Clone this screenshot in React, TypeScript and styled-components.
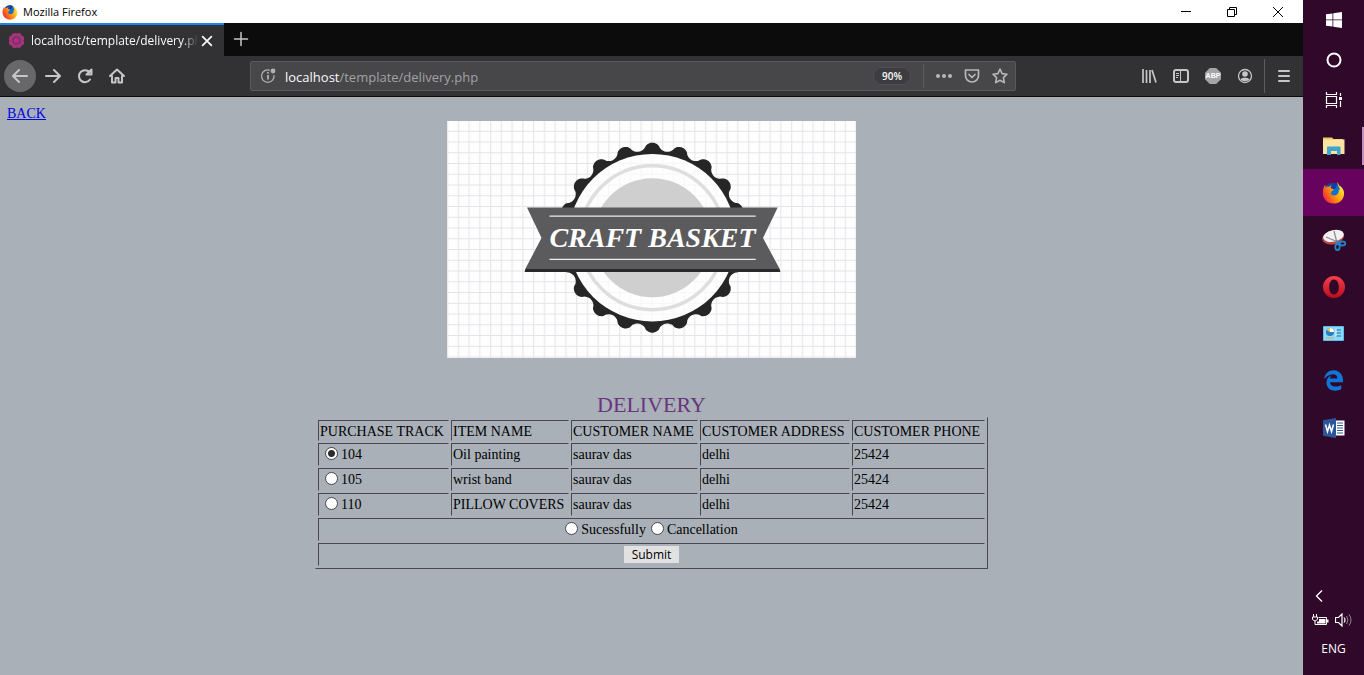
import React from "react";
import styled, { createGlobalStyle } from "styled-components";

const ui = `"Open Sans", "Noto Sans", sans-serif`;
const serif = `"Liberation Serif", "Times New Roman", serif`;

const GlobalStyle = createGlobalStyle`
  * { box-sizing: border-box; }
  body { margin: 0; background: #a9b0b8; }
  svg { display: block; flex: none; }
`;

const Desktop = styled.div`
  display: flex;
  min-height: 100vh;
`;

const Browser = styled.div`
  flex: 1;
  min-width: 0;
  display: flex;
  flex-direction: column;
`;

const TitleBar = styled.header`
  display: flex;
  align-items: center;
  height: 23px;
  background: #fff;
  padding-left: 2px;
  font: 11px/16px ${ui};
  color: #000;
`;

const TitleText = styled.span`
  flex: 1;
  margin-left: 5px;
`;

const WindowButton = styled.button`
  display: flex;
  align-items: center;
  justify-content: center;
  width: 46px;
  height: 22px;
  padding: 0;
  border: 0;
  background: none;
`;

const WindowButtons = styled.div`
  display: flex;
  margin-right: 2px;
`;

const TabStrip = styled.div`
  display: flex;
  gap: 1px;
  height: 33px;
  background: #0c0c0d;
`;

const Tab = styled.div`
  display: flex;
  align-items: center;
  width: 224px;
  padding: 0 8px;
  background: #323234;
  border-top: 2px solid #1b84f0;
  color: #f9f9fa;
  font: 12px/18px ${ui};
`;

const TabTitle = styled.span`
  flex: 1;
  min-width: 0;
  margin-left: 6px;
  overflow: hidden;
  white-space: nowrap;
  mask-image: linear-gradient(to left, transparent, #000 16px);
`;

const IconButton = styled.button<{ $round?: boolean }>`
  display: flex;
  align-items: center;
  justify-content: center;
  flex: none;
  width: 32px;
  height: 32px;
  padding: 0;
  border: 0;
  border-radius: 50%;
  margin-right: ${(p) => (p.$round ? 1 : 0)}px;
  background: ${(p) => (p.$round ? "#68686a" : "none")};
  color: #c6c6c8;
`;

const TabClose = styled(IconButton)`
  width: 18px;
  height: 24px;
  color: #f9f9fa;
`;

const ToolBar = styled.nav`
  display: flex;
  align-items: center;
  height: 41px;
  padding: 0 3px 0 4px;
  background: #323234;
  border-bottom: 1px solid #0c0c0d;
`;

const Spring = styled.div`
  flex: 117 1 0;
`;

const UrlBar = styled.div`
  flex: 754 1 0;
  min-width: 0;
  display: flex;
  align-items: center;
  height: 30px;
  padding: 0 1px 0 9px;
  background: #474749;
  border: 1px solid #5a5a5c;
  border-radius: 2px;
  color: #b1b1b3;
  font: 13px/20px ${ui};
`;

const Address = styled.div`
  flex: 1;
  margin-left: 8px;
  padding-top: 1px;
  color: #a2a2a4;
`;

const Host = styled.span`
  color: #f9f9fa;
`;

const Zoom = styled.button`
  width: 38px;
  height: 18px;
  padding: 0;
  border: 1px solid #4b5058;
  border-radius: 9px;
  background: #3d3d40;
  color: #f9f9fa;
  font: 10px/14px ${ui};
  font-weight: 600;
`;

const Divider = styled.div<{ $tall?: boolean }>`
  width: 1px;
  height: ${(p) => (p.$tall ? 34 : 24)}px;
  margin: ${(p) => (p.$tall ? "0 3px" : "0 6px 0 12px")};
  background: #5c5c5e;
`;

const UrlAction = styled(IconButton)`
  width: 28px;
  height: 28px;
  color: #b8b8ba;
`;

const Page = styled.main`
  flex: 1;
  padding: 8px 7px;
  background: #a9b0b8;
  font: 14px/17px ${serif};
  color: #000;
`;

const BackLink = styled.a`
  color: #0000e0;
`;

const BackRow = styled.div`
  height: 16px;
`;

const Banner = styled.svg`
  margin: 0 auto 34px;
`;

const DeliveryTable = styled.table`
  margin: 0 auto;
  border-collapse: separate;
  border-spacing: 2px;
  border: 1px solid transparent;
  border-right-color: #444a50;
  border-bottom-color: #444a50;
`;

const Caption = styled.caption`
  height: 25px;
  color: #68357e;
  font-size: 22px;
  line-height: 25px;
`;

const cell = `
  padding: 1px;
  border: 1px solid transparent;
  border-top-color: #444a50;
  border-left-color: #444a50;
  white-space: nowrap;
`;

const HeadCell = styled.th<{ $width: number }>`
  ${cell}
  padding: 2px 1px 0;
  width: ${(p) => p.$width}px;
  height: 21px;
  font-weight: 400;
  text-align: left;
`;

const Cell = styled.td`
  ${cell}
  height: 23px;
`;

const ChoiceGroup = styled.div`
  display: flex;
  justify-content: center;
  gap: 5px;
`;

const Choice = styled.label<{ $inset?: boolean }>`
  display: flex;
  align-items: center;
  padding-left: ${(p) => (p.$inset ? 5 : 0)}px;
`;

const Radio = styled.input`
  appearance: none;
  width: 13px;
  height: 13px;
  margin: 0 3px 2px 0;
  border: 1px solid #45484c;
  border-radius: 50%;
  background: #fff;

  &:checked {
    background: radial-gradient(circle, #2b2b2b 3px, #fff 4px);
  }
`;

const Submit = styled.button`
  display: block;
  width: 55px;
  height: 17px;
  margin: 0 auto;
  padding: 0;
  border: 0;
  background: #e1e1e1;
  color: #000;
  font: 12px/17px ${ui};
`;

const TaskBar = styled.aside`
  display: flex;
  flex-direction: column;
  flex: none;
  width: 61px;
  background: #30082a;
  color: #fff;
`;

const Task = styled.button<{ $app?: boolean; $active?: boolean; $open?: boolean }>`
  display: flex;
  align-items: center;
  justify-content: center;
  flex: none;
  height: ${(p) => (p.$app ? 47 : 40)}px;
  padding: 0;
  border: 0;
  background: ${(p) =>
    p.$active
      ? "#67035f"
      : p.$open
        ? "linear-gradient(#c58abf, #c58abf) right center / 2px 38px no-repeat"
        : "none"};
  color: #fff;
`;

const AppTasks = styled.div`
  display: flex;
  flex-direction: column;
  padding-top: 2px;
`;

const Tray = styled.div`
  display: flex;
  flex-direction: column;
  align-items: center;
  margin-top: auto;
  padding-bottom: 16px;
  font: 12px/20px ${ui};
`;

const TrayRow = styled.div<{ $start?: boolean }>`
  display: flex;
  align-items: center;
  justify-content: ${(p) => (p.$start ? "flex-start" : "center")};
  gap: 6px;
  width: 100%;
  height: 24px;
  padding-left: ${(p) => (p.$start ? 12 : 0)}px;
  padding-right: ${(p) => (p.$start ? 0 : 3)}px;
`;

const Language = styled.div`
  padding-top: 7px;
`;

function FirefoxIcon({ size, id }: { size: number; id: string }) {
  return (
    <svg width={size} height={size} viewBox="0 0 24 24">
      <defs>
        <linearGradient id={id} x1="0.95" y1="0.2" x2="0.05" y2="0.75">
          <stop offset="0" stopColor="#fff04a" />
          <stop offset="0.35" stopColor="#ffb515" />
          <stop offset="0.65" stopColor="#ff7a12" />
          <stop offset="1" stopColor="#f02a3c" />
        </linearGradient>
      </defs>
      <circle cx="11.5" cy="11" r="9" fill="#0a6fd0" />
      <path d="M6 4.500C8 2 13 .8 16 3l-2 5-5 2z" fill="#123f9c" />
      <path
        d="M16 1c1 1.500 1.500 2.500 1.800 3.800 4 2.200 6 6 5 10.200C21.700 20.300 17.500 23.500 12 23.500 5.500 23.500.8 18.500.8 12.500c0-3.500 1-6 2.400-8.500l.8 2.700C5 6 6 5.700 7.400 6c.6-.8 1.500-1.500 2.700-1.800-.8 1.100-1.200 2-.9 3 .6 1 2 .9 3.200 1.100-.2 1.300-1.500 1.900-2.500 2.600-.3 1 .1 1.700-1 2.200 1.700 2.400 4.700 2.400 6.700 1 1.800-1.200 2.300-3.500 1.700-5.600.7.500 1 .9 1.300 1.500.2-3.500-2.500-4.700-2.600-9z"
        fill={`url(#${id})`}
      />
    </svg>
  );
}

function FlowerIcon() {
  const petals = Array.from({ length: 8 }, (_, i) => ((i + 0.5) * Math.PI) / 4);
  return (
    <svg width="17" height="17" viewBox="0 0 17 17">
      {petals.map((a) => (
        <circle key={a} cx={8.5 + 5 * Math.cos(a)} cy={8.5 + 5 * Math.sin(a)} r="3" fill="#a3357b" />
      ))}
      <circle cx="8.500" cy="8.500" r="5" fill="#a3357b" />
      <circle cx="8.500" cy="8.500" r="3.500" fill="none" stroke="#7a2c68" strokeWidth="1.500" />
      <circle cx="8.500" cy="8.500" r="1.500" fill="#e0187c" />
    </svg>
  );
}

const Line = ({ d, size = 16, w = 2 }: { d: string; size?: number; w?: number }) => (
  <svg
    width={size}
    height={size}
    viewBox="0 0 16 16"
    fill="none"
    stroke="currentColor"
    strokeWidth={w}
    strokeLinecap="round"
    strokeLinejoin="round"
  >
    <path d={d} />
  </svg>
);

function LibraryIcon() {
  return (
    <svg width="16" height="16" viewBox="0 0 16 16" stroke="currentColor" strokeWidth="2">
      <path d="M2 1v14M5.500 2v13M9 2v13M11 2l4 12.500" strokeWidth="1.700" />
    </svg>
  );
}

function SidebarIcon() {
  return (
    <svg width="16" height="16" viewBox="0 0 16 16" fill="none" stroke="currentColor">
      <rect x="1" y="2" width="14" height="12" rx="2" strokeWidth="2" />
      <path d="M7.500 2v12M3 5.500h3M3 7.500h3M3 9.500h2" strokeWidth="1" />
    </svg>
  );
}

const AbpLabel = styled.span`
  display: flex;
  align-items: center;
  justify-content: center;
  width: 16px;
  height: 16px;
  background: #a4a4a6;
  clip-path: polygon(30% 0, 70% 0, 100% 30%, 100% 70%, 70% 100%, 30% 100%, 0 70%, 0 30%);
  color: #fff;
  font: bold 7px/16px "Liberation Sans", sans-serif;
`;

function AccountIcon() {
  return (
    <svg width="16" height="16" viewBox="0 0 16 16">
      <circle cx="8" cy="8" r="6.500" fill="none" stroke="currentColor" strokeWidth="1.300" />
      <circle cx="8" cy="6" r="2.800" fill="currentColor" />
      <path d="M3.500 11.500C5 9.500 6.500 9.700 8 9.700s3 0 4.500 1.800C11 13.500 5 13.500 3.500 11.500z" fill="currentColor" />
    </svg>
  );
}

function InfoIcon() {
  return (
    <svg width="17" height="16" viewBox="0 0 17 16">
      <path d="M10 2.200A6.300 6.300 0 1 0 14 7" fill="none" stroke="currentColor" strokeWidth="1.200" />
      <path d="M8 7v4.500" fill="none" stroke="currentColor" strokeWidth="1.800" />
      <circle cx="8" cy="4.800" r="1" fill="currentColor" />
      <circle cx="13" cy="3" r="2.400" fill="currentColor" />
    </svg>
  );
}

function scallop(cx: number, cy: number) {
  const points = Array.from({ length: 720 }, (_, i) => {
    const a = (i * Math.PI) / 360 - Math.PI / 2;
    const wave = Math.cos((20 * i * Math.PI) / 360);
    const r = 91 + 4 * Math.sign(wave) * Math.pow(Math.abs(wave), 0.65);
    return `${(cx + r * Math.cos(a)).toFixed(2)},${(cy + r * Math.sin(a)).toFixed(2)}`;
  });
  return points.join(" ");
}

function CraftBasket() {
  return (
    <Banner width="409" height="237" viewBox="0 0 409 237" role="img" aria-label="Craft Basket">
      <defs>
        <pattern id="grid" width="10.750" height="10.750" patternUnits="userSpaceOnUse">
          <path d="M.7 0V10.750M0 10.250H10.750" stroke="#e3e4e8" strokeWidth="1" />
        </pattern>
      </defs>
      <rect width="409" height="237" fill="#fefefe" />
      <rect width="409" height="237" fill="url(#grid)" />
      <polygon points={scallop(205.3, 116.7)} fill="#262626" />
      <circle cx="205.300" cy="116.700" r="83.700" fill="#fefefe" />
      <circle cx="205.300" cy="116.700" r="83" fill="url(#grid)" opacity=".3" />
      <circle cx="205.300" cy="116.700" r="72" fill="none" stroke="#dedede" strokeWidth="3.500" />
      <circle cx="205.300" cy="116.700" r="59.500" fill="#cfcfcf" />
      <path d="M80 86.500H330.700L316 117 333 148.500V151H78V148.500L94.500 117z" fill="#5b5b5d" />
      <path d="M79 148H332l1.500 3H77.500z" fill="#282828" />
      <path d="M102.500 95.200H308.700M102.500 138.300H308.700" stroke="#ececec" strokeWidth="1.200" />
      <text
        x="205.500"
        y="126"
        textAnchor="middle"
        fontFamily={`"Liberation Serif", serif`}
        fontStyle="italic"
        fontWeight="700"
        fontSize="28"
        fill="#fff"
      >
        CRAFT BASKET
      </text>
    </Banner>
  );
}

function StartIcon() {
  return (
    <svg width="16" height="16" viewBox="0 0 16 16" fill="#fff">
      <path d="M0 2.300 6.500 1.400V7.500H0zM7.300 1.300 16 0V7.500H7.300zM0 8.300H6.500V14.600L0 13.700zM7.300 8.300H16V16L7.300 14.700z" />
    </svg>
  );
}

function TaskViewIcon() {
  return (
    <svg width="18" height="16" viewBox="0 0 18 16" fill="none" stroke="#fff" strokeWidth="1.200">
      <path d="M1.500 0v2.500h10V0M1.500 16v-2.500h10V16M1.500 4.500h10v7h-10zM15.500 1v3M15.500 9v6" />
      <path d="M14 5h3v3h-3z" fill="#fff" stroke="none" />
    </svg>
  );
}

function FolderIcon() {
  return (
    <svg width="22" height="20" viewBox="0 0 22 20">
      <path d="M0 1.500h9l1.500 1.500H20v3H0z" fill="#efc768" />
      <path d="M0 3.500h21.500V18H0z" fill="#fbe3a0" />
      <path d="M4 19v-7.500q0-1 1-1h11.500q1 0 1 1V19h-3.500v-4H8v4z" fill="#3fa4cf" />
    </svg>
  );
}

function SnipIcon() {
  return (
    <svg width="24" height="22" viewBox="0 0 24 22">
      <ellipse cx="11" cy="8.500" rx="11" ry="6.800" fill="#b84a48" transform="rotate(-12 11 8)" />
      <ellipse cx="11.500" cy="7" rx="10.500" ry="5.800" fill="#f3f0f1" transform="rotate(-12 11 7)" />
      <path d="M4 8l12 5M12 2l3 12" stroke="#8d8d95" strokeWidth="1.300" />
      <g fill="none" stroke="#2483c5" strokeWidth="1.800">
        <ellipse cx="15.500" cy="18" rx="2.200" ry="3" />
        <ellipse cx="20.500" cy="14.500" rx="2.800" ry="2" />
        <path d="M14 12l4 2M15 15l3-2" />
      </g>
    </svg>
  );
}

function OperaIcon() {
  return (
    <svg width="22" height="22" viewBox="0 0 22 22">
      <defs>
        <linearGradient id="opera" x1="0" y1="0" x2="0" y2="1">
          <stop offset="0" stopColor="#f5404b" />
          <stop offset="1" stopColor="#b80d1b" />
        </linearGradient>
      </defs>
      <path
        fillRule="evenodd"
        d="M11 0a11 11 0 1 0 0 22 11 11 0 1 0 0-22zM11 3.500c3 0 4.800 3.400 4.800 7.500s-1.800 7.500-4.800 7.500S6.200 15.100 6.200 11 8 3.500 11 3.500z"
        fill="url(#opera)"
      />
    </svg>
  );
}

function PanelIcon() {
  return (
    <svg width="21" height="15" viewBox="0 0 21 15">
      <rect width="21" height="15" rx="1" fill="#56bdec" />
      <rect x="1" y="1" width="19" height="13" fill="#8bd8f7" />
      <circle cx="7" cy="6" r="4" fill="#217fc4" />
      <path d="M7 6V2a4 4 0 0 1 4 4z" fill="#fff" />
      <path d="M7 6l-3.500-2a4 4 0 0 1 3.500-2z" fill="#f5c34d" />
      <path d="M13 4h5M13 7h5M13 10h5" stroke="#2271b4" strokeWidth="1.200" />
      <path d="M13 2.500v8" stroke="#e9f8ff" />
      <path d="M3 12h8" stroke="#e6a745" />
    </svg>
  );
}

function EdgeIcon() {
  return (
    <svg width="21" height="21" viewBox="0 0 512 512" fill="#0f76d8">
      <path d="M486.286 243.671c0-44.032-7.754-84.465-28.801-122.405C416.498 47.879 343.912 8.001 258.893 8.001 118.962 7.724 40.617 113.214 26.056 227.679c42.429-61.312 117.073-121.376 220.375-124.966 0 0 109.666 0 99.419 104.957H169.997c6.369-37.386 18.554-58.986 34.339-78.926-75.048 34.893-121.850 96.096-120.742 188.315.83 71.448 50.124 144.836 120.743 171.976 83.357 31.847 192.776 7.200 240.132-21.324V363.307c-80.864 56.494-270.871 60.925-272.255-67.572h314.073v-52.064z" />
    </svg>
  );
}

function WordIcon() {
  return (
    <svg width="22" height="20" viewBox="0 0 22 20">
      <path d="M12 2.500h9.500v15H12z" fill="#fff" />
      <path d="M14 5h6M14 7.500h6M14 10h6M14 12.500h6M14 15h6" stroke="#2b579a" />
      <path d="M0 2.200 13 0v20L0 17.800z" fill="#2b579a" />
      <path d="M2.500 6.500 4.500 13.500 6.500 7 8.500 13.500 10.500 6.500" fill="none" stroke="#fff" strokeWidth="1.500" />
    </svg>
  );
}

function BatteryIcon() {
  return (
    <svg width="17" height="13" viewBox="0 0 17 13" fill="none" stroke="#fff">
      <path d="M1.500 0v3M4.500 0v3M.5 3h5v2.500L3 7 .5 5.500zM3 7v3.500h3" />
      <path d="M6.500 3.500h8v7H5" />
      <path d="M7 5h6.500v4.500H5V7.500h2zM15 5.500h1.500v3H15z" fill="#fff" stroke="none" />
    </svg>
  );
}

function SpeakerIcon() {
  return (
    <svg width="17" height="14" viewBox="0 0 17 14" fill="none" stroke="#fff">
      <path d="M.5 4.500h3L7 1v12L3.500 9.500h-3zM9 4.500q2 2.500 0 5" strokeWidth="1.200" />
      <path d="M11.500 3q3 4 0 8M14 1.500q4 5.500 0 11" opacity=".5" />
    </svg>
  );
}

const columns = [
  { title: "PURCHASE TRACK", width: 131 },
  { title: "ITEM NAME", width: 118 },
  { title: "CUSTOMER NAME", width: 127 },
  { title: "CUSTOMER ADDRESS", width: 150 },
  { title: "CUSTOMER PHONE", width: 133 },
];

const orders = [
  { track: "104", item: "Oil painting", name: "saurav das", address: "delhi", phone: "25424" },
  { track: "105", item: "wrist band", name: "saurav das", address: "delhi", phone: "25424" },
  { track: "110", item: "PILLOW COVERS", name: "saurav das", address: "delhi", phone: "25424" },
];

export default function App() {
  return (
    <Desktop>
      <GlobalStyle />
      <Browser>
        <TitleBar>
          <FirefoxIcon size={16} id="fx-title" />
          <TitleText>Mozilla Firefox</TitleText>
          <WindowButtons>
            <WindowButton aria-label="Minimize">
              <svg width="10" height="10" stroke="#000"><path d="M0 4.500h10" /></svg>
            </WindowButton>
            <WindowButton aria-label="Restore">
              <svg width="10" height="10" fill="none" stroke="#000">
                <path d="M.5 2.500h7v7h-7zM2.500 2.500v-2h7v7h-2" />
              </svg>
            </WindowButton>
            <WindowButton aria-label="Close">
              <svg width="10" height="10" stroke="#000"><path d="M0 0l10 10M10 0L0 10" /></svg>
            </WindowButton>
          </WindowButtons>
        </TitleBar>
        <TabStrip>
          <Tab>
            <FlowerIcon />
            <TabTitle>localhost/template/delivery.php</TabTitle>
            <TabClose aria-label="Close tab">
              <Line size={14} d="M3 3l10 10M13 3L3 13" />
            </TabClose>
          </Tab>
          <IconButton aria-label="New tab">
            <Line d="M8 1.500v13M1.500 8h13" w={1.5} />
          </IconButton>
        </TabStrip>
        <ToolBar>
          <IconButton $round aria-label="Back"><Line d="M15 8H1.500M7 2L1 8l6 6" /></IconButton>
          <IconButton aria-label="Forward"><Line d="M1 8h13.500M9 2l6 6-6 6" /></IconButton>
          <IconButton aria-label="Reload">
            <Line d="M13 11.500A6 6 0 1 1 12.500 4.200M14.500 1.500v5h-5z" />
          </IconButton>
          <IconButton aria-label="Home">
            <Line d="M1 8l7-6.500L15 8M3 8v6.500h3.500V10h3v4.500H13V8" />
          </IconButton>
          <Spring />
          <UrlBar>
            <InfoIcon />
            <Address><Host>localhost</Host>/template/delivery.php</Address>
            <Zoom>90%</Zoom>
            <Divider />
            <UrlAction aria-label="Page actions">
              <svg width="16" height="16" fill="currentColor">
                <circle cx="2" cy="8" r="2" /><circle cx="8" cy="8" r="2" /><circle cx="14" cy="8" r="2" />
              </svg>
            </UrlAction>
            <UrlAction aria-label="Save to Pocket">
              <Line d="M1.500 2h13v5.500a6.500 6.500 0 0 1-13 0zM5 6.500l3 3 3-3" w={1.7} />
            </UrlAction>
            <UrlAction aria-label="Bookmark">
              <Line d="M8 1l2.100 4.600 4.900.6-3.600 3.400.9 5L8 12.200 3.700 14.600l.9-5L1 6.200l4.900-.6z" w={1.6} />
            </UrlAction>
          </UrlBar>
          <Spring />
          <IconButton aria-label="Library"><LibraryIcon /></IconButton>
          <IconButton aria-label="Sidebars"><SidebarIcon /></IconButton>
          <IconButton aria-label="Adblock Plus"><AbpLabel>ABP</AbpLabel></IconButton>
          <IconButton aria-label="Account"><AccountIcon /></IconButton>
          <Divider $tall />
          <IconButton aria-label="Menu"><Line d="M3 3h10M3 8h10M3 13h10" /></IconButton>
        </ToolBar>
        <Page>
          <BackRow><BackLink href="#">BACK</BackLink></BackRow>
          <CraftBasket />
          <form onSubmit={(e) => e.preventDefault()}>
            <DeliveryTable>
              <Caption>DELIVERY</Caption>
              <thead>
                <tr>
                  {columns.map((c) => (
                    <HeadCell key={c.title} $width={c.width}>{c.title}</HeadCell>
                  ))}
                </tr>
              </thead>
              <tbody>
                {orders.map((o, i) => (
                  <tr key={o.track}>
                    <Cell>
                      <Choice $inset>
                        <Radio type="radio" name="track" value={o.track} defaultChecked={i === 0} />
                        {o.track}
                      </Choice>
                    </Cell>
                    <Cell>{o.item}</Cell>
                    <Cell>{o.name}</Cell>
                    <Cell>{o.address}</Cell>
                    <Cell>{o.phone}</Cell>
                  </tr>
                ))}
                <tr>
                  <Cell colSpan={5}>
                    <ChoiceGroup>
                      <Choice><Radio type="radio" name="status" value="success" />Sucessfully</Choice>
                      <Choice><Radio type="radio" name="status" value="cancel" />Cancellation</Choice>
                    </ChoiceGroup>
                  </Cell>
                </tr>
                <tr>
                  <Cell colSpan={5}><Submit type="submit">Submit</Submit></Cell>
                </tr>
              </tbody>
            </DeliveryTable>
          </form>
        </Page>
      </Browser>
      <TaskBar>
        <Task aria-label="Start"><StartIcon /></Task>
        <Task aria-label="Cortana">
          <svg width="16" height="16"><circle cx="8" cy="8" r="6.500" fill="none" stroke="#fff" strokeWidth="2" /></svg>
        </Task>
        <Task aria-label="Task view"><TaskViewIcon /></Task>
        <AppTasks>
          <Task $app $open aria-label="File Explorer"><FolderIcon /></Task>
          <Task $app $active aria-label="Firefox"><FirefoxIcon size={23} id="fx-task" /></Task>
          <Task $app aria-label="Snipping Tool"><SnipIcon /></Task>
          <Task $app aria-label="Opera"><OperaIcon /></Task>
          <Task $app aria-label="Control Panel"><PanelIcon /></Task>
          <Task $app aria-label="Edge"><EdgeIcon /></Task>
          <Task $app aria-label="Word"><WordIcon /></Task>
        </AppTasks>
        <Tray>
          <TrayRow $start>
            <svg width="8" height="12" fill="none" stroke="#fff" strokeWidth="1.300"><path d="M7 .5L1.500 6 7 11.500" /></svg>
          </TrayRow>
          <TrayRow><BatteryIcon /><SpeakerIcon /></TrayRow>
          <Language>ENG</Language>
        </Tray>
      </TaskBar>
    </Desktop>
  );
}
